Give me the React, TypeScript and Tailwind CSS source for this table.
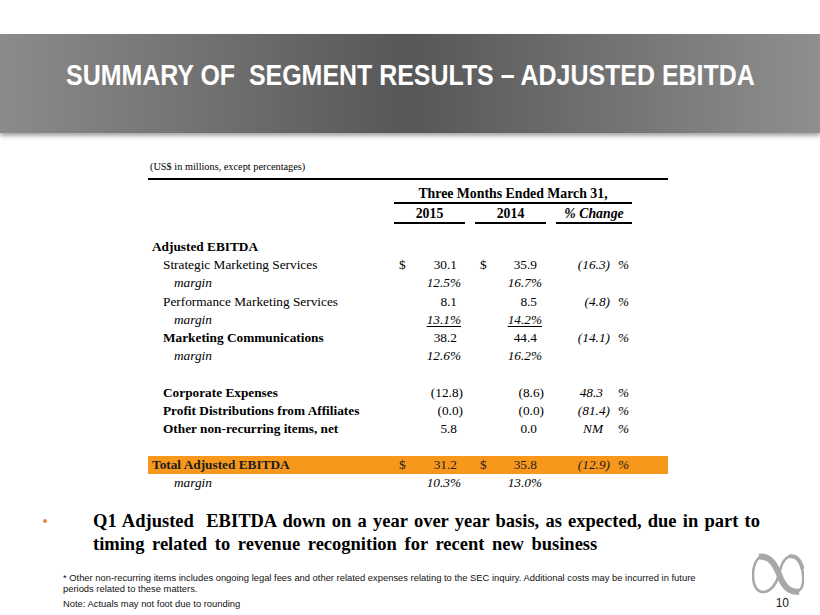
type Cell = { v: string; kind?: 'num' | 'paren' | 'pct'; u?: boolean };

interface Row {
  label: string;
  indent: 'head' | 'item' | 'margin';
  bold?: boolean;
  dollar?: boolean;
  a?: Cell;
  b?: Cell;
  chg?: Cell;
  total?: boolean;
  blank?: boolean;
}

const rows: Row[] = [
  { label: 'Adjusted EBITDA', indent: 'head', bold: true },
  { label: 'Strategic Marketing Services', indent: 'item', dollar: true, a: { v: '30.1' }, b: { v: '35.9' }, chg: { v: '(16.3)', kind: 'paren' } },
  { label: 'margin', indent: 'margin', a: { v: '12.5%', kind: 'pct' }, b: { v: '16.7%', kind: 'pct' } },
  { label: 'Performance Marketing Services', indent: 'item', a: { v: '8.1' }, b: { v: '8.5' }, chg: { v: '(4.8)', kind: 'paren' } },
  { label: 'margin', indent: 'margin', a: { v: '13.1%', kind: 'pct', u: true }, b: { v: '14.2%', kind: 'pct', u: true } },
  { label: 'Marketing Communications', indent: 'item', bold: true, a: { v: '38.2' }, b: { v: '44.4' }, chg: { v: '(14.1)', kind: 'paren' } },
  { label: 'margin', indent: 'margin', a: { v: '12.6%', kind: 'pct' }, b: { v: '16.2%', kind: 'pct' } },
  { label: '', indent: 'item', blank: true },
  { label: 'Corporate Expenses', indent: 'item', bold: true, a: { v: '(12.8)', kind: 'paren' }, b: { v: '(8.6)', kind: 'paren' }, chg: { v: '48.3' } },
  { label: 'Profit Distributions from Affiliates', indent: 'item', bold: true, a: { v: '(0.0)', kind: 'paren' }, b: { v: '(0.0)', kind: 'paren' }, chg: { v: '(81.4)', kind: 'paren' } },
  { label: 'Other non-recurring items, net', indent: 'item', bold: true, a: { v: '5.8' }, b: { v: '0.0' }, chg: { v: 'NM' } },
  { label: '', indent: 'item', blank: true },
  { label: 'Total Adjusted EBITDA', indent: 'head', bold: true, total: true, dollar: true, a: { v: '31.2' }, b: { v: '35.8' }, chg: { v: '(12.9)', kind: 'paren' } },
  { label: 'margin', indent: 'margin', a: { v: '10.3%', kind: 'pct' }, b: { v: '13.0%', kind: 'pct' } },
];

const indentCls = {
  head: 'pl-[4px]',
  item: 'pl-[15px]',
  margin: 'pl-[26px] italic',
};

function ValueCell({ cell, dollar, col }: { cell?: Cell; dollar?: boolean; col: 'a' | 'b' }) {
  const pad =
    cell?.kind === 'paren'
      ? 'pr-[2px]'
      : cell?.kind === 'pct'
        ? 'pr-[4px] italic'
        : col === 'a'
          ? 'pr-[8px]'
          : 'pr-[9px]';
  return (
    <div className="flex items-center justify-between pl-[5px]">
      <span>{dollar ? '$' : ''}</span>
      <span className={`${pad} ${cell?.u ? 'underline underline-offset-[2px]' : ''}`}>{cell?.v ?? ''}</span>
    </div>
  );
}

function InfinityLogo() {
  // ribbon-like infinity: thin outer loops, heavy diagonal band
  const loop =
    'M12 3 C20 3, 24 14, 27 21 C30 30, 36 40, 44 39 C50 38, 52 30, 51 22 C50 10, 46 3, 40 3 C33 3, 29 12, 27 21 C25 30, 19 39, 11 39 C4 39, 1 31, 1 22 C1 12, 5 3, 12 3 Z';
  return (
    <svg width={52} height={42} viewBox="0 0 52 42" aria-label="logo">
      <path d={loop} fill="none" stroke="#a8a8a8" strokeWidth={2.6} />
      <path d="M7 3.8 C19 2, 24 14, 27 21 C30 30, 36 40, 47 38.6" fill="none" stroke="#a8a8a8" strokeWidth={6} />
      <path d="M37 3.6 C44 2, 49 8, 50.6 16" fill="none" stroke="#a8a8a8" strokeWidth={4} />
    </svg>
  );
}

export default function App() {
  return (
    <div className="w-[820px] h-[615px] bg-white overflow-hidden flex flex-col text-black">
      {/* Title band */}
      <div className="mt-[34px] h-[99px] shrink-0 flex items-center justify-center bg-[linear-gradient(to_right,#8b8b8b,#575757_50%,#8f8f8f)] shadow-[0_3px_4px_rgba(0,0,0,0.35)]">
        <h1 className="font-['Liberation_Sans',Arial,sans-serif] font-bold text-white text-[29px] leading-none scale-x-[0.86] whitespace-pre -mt-[16px]">
          {'SUMMARY OF  SEGMENT RESULTS – ADJUSTED EBITDA'}
        </h1>
      </div>

      {/* Table */}
      <div className="ml-[148px] w-[520px] mt-[28px] font-['Liberation_Serif','Times_New_Roman',serif]">
        <p className="text-[10.3px] leading-[11px] pl-[2px]">(US$ in millions, except percentages)</p>
        <div className="mt-[6px] border-t-2 border-black" />
        <div className="grid grid-cols-[246px_71px_10px_71px_10px_56px_20px_36px] text-[13.3px]">
          <div className="col-start-2 col-end-8 h-[24px] flex items-end justify-center pb-[1px] border-b-2 border-black font-bold text-[13.8px] leading-[14px]">
            Three Months Ended March 31,
          </div>
          <div className="col-start-2 col-end-3 h-[20px] flex items-end justify-center pb-[1px] border-b-2 border-black font-bold text-[13.8px] leading-[14px]">
            2015
          </div>
          <div className="col-start-4 col-end-5 h-[20px] flex items-end justify-center pb-[1px] border-b-2 border-black font-bold text-[13.8px] leading-[14px]">
            2014
          </div>
          <div className="col-start-6 col-end-8 h-[20px] flex items-end justify-center pb-[1px] border-b-2 border-black italic font-bold text-[13.8px] leading-[14px]">
            % Change
          </div>
        </div>

        <div className="mt-[14px] text-[13.3px] leading-[18.2px]">
          {rows.map((r, i) => (
            <div
              key={i}
              className={`grid grid-cols-[246px_71px_10px_71px_10px_56px_20px_36px] h-[18.2px] ${r.total ? 'bg-[#f7971c] text-[#1c1c1c]' : ''}`}
            >
              <div className={`${indentCls[r.indent]} ${r.bold ? 'font-bold' : ''} whitespace-nowrap`}>{r.label}</div>
              {r.blank || (r.indent === 'head' && !r.total) ? null : (
                <>
                  <ValueCell cell={r.a} dollar={r.dollar} col="a" />
                  <div />
                  <ValueCell cell={r.b} dollar={r.dollar} col="b" />
                  <div />
                  <div className={`text-right italic ${r.chg?.kind === 'paren' ? 'pr-[2px]' : 'pr-[9px]'}`}>{r.chg?.v ?? ''}</div>
                  <div className="pl-[6px] italic">{r.chg ? '%' : ''}</div>
                  <div />
                </>
              )}
            </div>
          ))}
        </div>
      </div>

      {/* Bullet */}
      <div className="mt-[17px] pl-[43px] flex font-['Liberation_Serif','Times_New_Roman',serif] font-bold text-[18.5px] leading-[23px]">
        <span className="w-[50px] shrink-0 flex items-center h-[23px]">
          <span className="w-[4px] h-[4px] rounded-full bg-[#e08a52]" />
        </span>
        <div className="w-[667px]">
          <span className="block text-justify [text-align-last:justify] [word-spacing:1px]">
            Q1 Adjusted{'\u00a0'} EBITDA down on a year over year basis, as expected, due in part to
          </span>
          <span className="block [word-spacing:3px]">timing related to revenue recognition for recent new business</span>
        </div>
      </div>

      {/* Footnotes + logo */}
      <div className="-mt-[3px] flex items-end font-['Liberation_Sans',Arial,sans-serif]">
        <div className="pl-[63px] text-[9.4px] leading-[11px] text-[#111]">
          <p>
            * Other non-recurring items includes ongoing legal fees and other related expenses relating to the SEC inquiry. Additional costs may be incurred in future
          </p>
          <p>periods related to these matters.</p>
          <p className="mt-[4px]">Note: Actuals may not foot due to rounding</p>
        </div>
        <div className="ml-auto mr-[16px] w-[52px] flex flex-col">
          <InfinityLogo />
          <span className="mt-[2px] text-right pr-[15px] text-[12px] leading-[12px] text-[#222]">10</span>
        </div>
      </div>
    </div>
  );
}
